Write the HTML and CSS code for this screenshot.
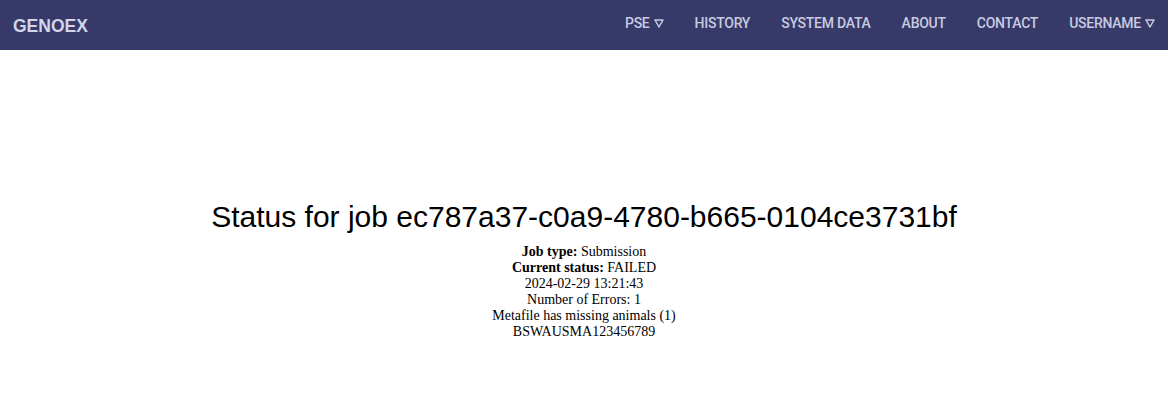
FILE: index.html
```html
<!DOCTYPE html>
<html lang="en">
<head>
<meta charset="utf-8">
<title>GENOEX - Job status</title>
<link rel="stylesheet" href="styles.css">
</head>
<body>
<header class="navbar">
  <a class="brand" href="#">GENOEX</a>
  <nav class="nav">
    <a class="nav-link" href="#">PSE <svg class="caret" viewBox="0 0 10 9" width="10" height="9"><path d="M1 1 H9 L5 8 Z" fill="none" stroke="currentColor" stroke-width="1.5" stroke-linejoin="round"/></svg></a>
    <a class="nav-link" href="#">HISTORY</a>
    <a class="nav-link" href="#">SYSTEM DATA</a>
    <a class="nav-link" href="#">ABOUT</a>
    <a class="nav-link" href="#">CONTACT</a>
    <a class="nav-link" href="#">USERNAME <svg class="caret" viewBox="0 0 10 9" width="10" height="9"><path d="M1 1 H9 L5 8 Z" fill="none" stroke="currentColor" stroke-width="1.5" stroke-linejoin="round"/></svg></a>
  </nav>
</header>
<main class="content">
  <h1 class="title">Status for job ec787a37-c0a9-4780-b665-0104ce3731bf</h1>
  <div class="details">
    <div><b>Job type:</b> Submission</div>
    <div><b>Current status:</b> FAILED</div>
    <div>2024-02-29 13:21:43</div>
    <div>Number of Errors: 1</div>
    <div>Metafile has missing animals (1)</div>
    <div>BSWAUSMA123456789</div>
  </div>
</main>
</body>
</html>
```
FILE: styles.css
```css
html, body {
  margin: 0;
  padding: 0;
  background: #ffffff;
}
body {
  font-family: "Liberation Serif", "Times New Roman", serif;
}
.navbar {
  height: 50px;
  background: #373a69;
  display: flex;
  align-items: center;
  justify-content: space-between;
  padding: 0 13px;
  box-sizing: border-box;
}
.brand {
  font-family: "Liberation Sans", Arial, sans-serif;
  font-weight: bold;
  font-size: 17.5px;
  color: #d3d5ea;
  text-decoration: none;
  padding-top: 3px;
}
.nav {
  display: flex;
  align-items: center;
  gap: 31px;
  padding-bottom: 4px;
}
.nav-link {
  font-family: Roboto, "Liberation Sans", sans-serif;
  font-weight: 500;
  font-size: 14px;
  letter-spacing: -0.25px;
  color: #c9cbe1;
  text-decoration: none;
  white-space: nowrap;
  display: flex;
  align-items: center;
  gap: 4px;
}
.caret {
  display: block;
  margin-top: 1px;
}
.content {
  padding-top: 150px;
  text-align: center;
}
.title {
  font-family: "Liberation Sans", Arial, sans-serif;
  font-weight: normal;
  font-size: 30px;
  color: #000000;
  margin: 0 0 10px;
}
.details {
  font-size: 14px;
  line-height: 16px;
  color: #000000;
}
```
